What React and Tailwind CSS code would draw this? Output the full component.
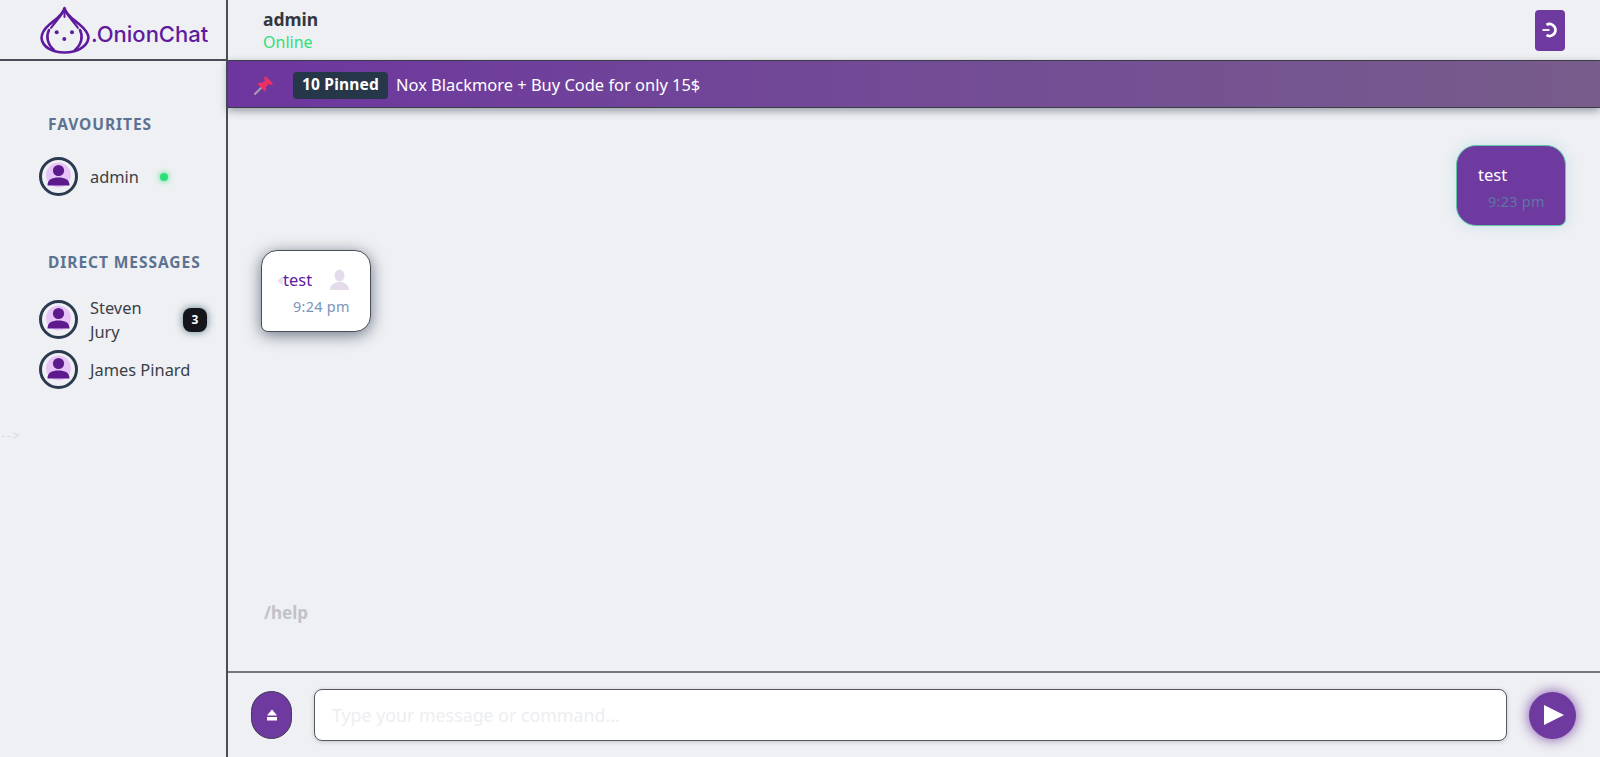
import React from 'react';

const font = { fontFamily: '"Noto Sans", sans-serif' };

const Avatar = () => (
  <div className="w-[39px] h-[39px] shrink-0 rounded-full border-[3px] border-[#2b3a4f] flex items-center justify-center">
    <svg width="27" height="29" viewBox="0 0 27 29">
      <circle cx="13.5" cy="13" r="12.5" fill="#e6c4f7" />
      <circle cx="13.5" cy="8.5" r="5.6" fill="#5c1a8c" />
      <path d="M2.5 23.5 C2.5 17.5 7 15.5 13.5 15.5 C20 15.5 24.5 17.5 24.5 23.5 Z" fill="#5c1a8c" />
    </svg>
  </div>
);

const Logo = () => (
  <svg width="52" height="48" viewBox="0 0 52 48" fill="none" stroke="#5f1b9e" strokeWidth="2.6" strokeLinecap="round" strokeLinejoin="round">
    <path d="M24.5 2 C23 9 16 13 10 18 C4 23 1.5 27 1.5 32 C2.5 41 12 46.5 24.5 46.5 C37 46.5 47 41 48.5 32 C48.5 27 45 23 39 18 C33 13 26 9 24.5 2 Z" />
    <path d="M24.5 3 C22 10 15 16 11 22" strokeWidth="2" />
    <path d="M24.5 3 C27 10 34 16 38 22" strokeWidth="2" />
    <path d="M24.5 3 L24.5 11" strokeWidth="2" />
    <path d="M9 24 C6 30 7 38 14 44" />
    <path d="M40 24 C43 30 42 38 35 44" />
    <circle cx="16.7" cy="26.3" r="2" fill="#5f1b9e" stroke="none" />
    <circle cx="32" cy="26.3" r="2" fill="#5f1b9e" stroke="none" />
    <circle cx="24.3" cy="33" r="2" fill="#5f1b9e" stroke="none" />
  </svg>
);

const Pin = () => (
  <svg width="22" height="22" viewBox="0 0 22 22">
    <path d="M2 20 L9 13" stroke="#a8a0ac" strokeWidth="2" strokeLinecap="round" />
    <path d="M12.5 2 L20 9.5 L18 11 L15.5 10 L13 13 C13.5 15 13 16.5 12 17.5 L4.5 10 C5.5 9 7.5 8.5 9 9 L12 6.5 L11 4 Z" fill="#ee2f62" />
  </svg>
);

const UserRow = ({ name, badge, online, wrap }) => (
  <div className="flex items-center pl-[39px] h-[39px]">
    <Avatar />
    <span className={`ml-[12px] text-[16.4px] leading-[24px] text-[#3a3f47] ${wrap ? 'w-[60px]' : ''}`}>{name}</span>
    {online && <span className="ml-[21px] w-[8px] h-[8px] rounded-full bg-[#2be07a] shadow-[0_0_6px_#2be07a]" />}
    {badge && (
      <span className="ml-[33px] w-[24px] h-[24px] rounded-[8px] bg-[#14161c] text-white text-[12px] font-bold flex items-center justify-center shadow-[0_0_8px_#5f7f8a]">
        {badge}
      </span>
    )}
  </div>
);

export default function App() {
  return (
    <div style={font} className="w-[1600px] h-[757px] flex overflow-hidden bg-[#eff0f3] text-[#3a3f47]">
      <aside className="w-[228px] shrink-0 border-r-2 border-[#4a4d55] flex flex-col">
        <div className="h-[61px] shrink-0 border-b-2 border-[#4a4d55] flex items-center pl-[40px]">
          <Logo />
          <span style={{ fontFamily: 'Inter, sans-serif' }} className="-ml-[1px] mt-[8px] text-[22px] leading-none font-medium text-[#5f1b9e]">.OnionChat</span>
        </div>
        <h3 className="mt-[53px] pl-[48px] text-[15.5px] leading-[20px] font-bold tracking-[0.95px] text-[#5b7291]">FAVOURITES</h3>
        <div className="mt-[23px]">
          <UserRow name="admin" online />
        </div>
        <h3 className="mt-[56px] pl-[48px] text-[15.5px] leading-[20px] font-bold tracking-[0.95px] text-[#5b7291] whitespace-nowrap">DIRECT MESSAGES</h3>
        <div className="mt-[28px] flex flex-col gap-[11px]">
          <UserRow name="Steven Jury" badge="3" wrap />
          <UserRow name="James Pinard" />
        </div>
        <div className="mt-[41px] pl-[1px] text-[12px] leading-none tracking-[2px] text-[#d5d8dd]">--&gt;</div>
      </aside>

      <main className="flex-1 flex flex-col min-w-0">
        <header className="h-[60px] shrink-0 flex items-center justify-between pl-[35px] pr-[35px]">
          <div className="pt-[1px]">
            <div className="text-[17.5px] leading-[23px] font-bold text-[#33373f]">admin</div>
            <div className="text-[16px] leading-[22px] text-[#2be07a]">Online</div>
          </div>
          <button className="w-[30px] h-[41px] rounded-[4px] bg-[#6f3a9f] flex items-center justify-center">
            <svg width="16" height="16" viewBox="0 0 16 16" fill="none" stroke="#fff">
              <path d="M4.5 2.8 A6 6 0 1 1 4.5 13.2" strokeWidth="2.6" />
              <path d="M0.5 8 H7.5" strokeWidth="1.8" />
            </svg>
          </button>
        </header>

        <div className="h-[48px] shrink-0 flex items-center pl-[25px] pt-[2px] border-y border-[#3a3d45] bg-gradient-to-r from-[#6d369f] to-[#785c8b] shadow-[0_3px_8px_rgba(40,50,70,0.45)] text-white">
          <Pin />
          <span className="ml-[18px] h-[27px] px-[9px] rounded-[4px] bg-[#27374a] text-[15.5px] font-bold tracking-[0.2px] flex items-center">10 Pinned</span>
          <span className="ml-[8px] text-[16.45px]">Nox Blackmore + Buy Code for only 15$</span>
        </div>

        <div className="flex-1 min-h-0 flex flex-col pl-[33px] pr-[34px] pt-[37px]">
          <div className="self-end w-[110px] h-[81px] rounded-[20px] rounded-br-[7px] bg-[#6f3a9f] border border-[#5fc7a5] shadow-[0_0_14px_rgba(120,200,220,0.35)] pl-[21px] pt-[17px]">
            <div className="text-[16.5px] leading-[24px] text-white">test</div>
            <div className="pl-[10px] mt-[5px] text-[14.4px] leading-[20px] tracking-[0.3px] text-[#5e76a5]">9:23 pm</div>
          </div>

          <div className="self-start relative w-[110px] h-[82px] mt-[24px] rounded-[16px] rounded-bl-[7px] bg-white border border-[#4a4d55] shadow-[0_3px_16px_rgba(50,65,90,0.7)] pl-[21px] pt-[17px]">
            <div className="flex items-center">
              <span className="relative z-10 text-[16.5px] leading-[24px] text-[#5f1b9e]">test</span>
              <svg className="ml-[17px]" width="21" height="22" viewBox="0 0 21 22" fill="#e4dcea">
                <ellipse cx="10.5" cy="6.5" rx="5" ry="6" />
                <path d="M1 21 C1 16 5 14 8 13 H13 C16 14 20 16 20 21 Z" />
              </svg>
            </div>
            <div className="pl-[10px] mt-[5px] text-[14.4px] leading-[20px] tracking-[0.3px] text-[#7a94ba]">9:24 pm</div>
            <svg className="absolute left-[15px] top-[24px]" width="10" height="12" viewBox="0 0 10 12" fill="#e5e1f3">
              <path d="M6 1 L0 6 L6 11 Z" />
            </svg>
          </div>

          <div className="mt-auto mb-[47px] ml-[3px] text-[17px] leading-[22px] font-bold text-[#c0c3c8]">/help</div>
        </div>

        <div className="h-[86px] shrink-0 border-t-2 border-[#74777d] flex items-center pl-[23px] pr-[24px]">
          <button className="w-[41px] h-[48px] shrink-0 rounded-full bg-[#6f3a9f] border border-[#3e3a55] flex items-center justify-center">
            <svg width="12" height="12" viewBox="0 0 12 12" fill="#fff">
              <path d="M6 0.5 L11 6.5 H1 Z" />
              <rect x="1" y="8" width="10" height="3.5" />
            </svg>
          </button>
          <input
            readOnly
            placeholder="Type your message or command..."
            className="ml-[22px] flex-1 min-w-0 h-[52px] rounded-[8px] bg-white border border-[#55585f] px-[17px] text-[17.8px] placeholder:text-[#eceef1] shadow-[0_1px_4px_rgba(60,70,90,0.25)] outline-none"
          />
          <button className="ml-[22px] w-[47px] h-[47px] shrink-0 rounded-full bg-[#6f3a9f] flex items-center justify-center shadow-[0_0_14px_rgba(111,58,159,0.9)]">
            <svg width="20" height="20" viewBox="0 0 20 20" fill="#fff" className="ml-[2px]">
              <path d="M0 0 L20 10 L0 20 Z" />
            </svg>
          </button>
        </div>
      </main>
    </div>
  );
}
